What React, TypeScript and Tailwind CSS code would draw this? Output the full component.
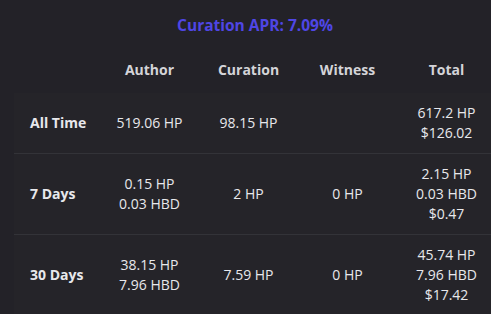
import React from "react";

const rows = [
  { label: "All Time", author: ["519.06 HP"], curation: ["98.15 HP"], witness: [], total: ["617.2 HP", "$126.02"] },
  { label: "7 Days", author: ["0.15 HP", "0.03 HBD"], curation: ["2 HP"], witness: ["0 HP"], total: ["2.15 HP", "0.03 HBD", "$0.47"] },
  { label: "30 Days", author: ["38.15 HP", "7.96 HBD"], curation: ["7.59 HP"], witness: ["0 HP"], total: ["45.74 HP", "7.96 HBD", "$17.42"] },
];

function Cell({ lines }: { lines: string[] }) {
  return (
    <td className="py-[10px] text-center align-middle">
      {lines.map((l, i) => (
        <div key={i}>{l}</div>
      ))}
    </td>
  );
}

export default function App() {
  return (
    <div
      className="w-[491px] h-[314px] overflow-hidden bg-[#232228] text-[#e8e8ec] text-sm leading-5"
      style={{ fontFamily: '"Open Sans", "Noto Sans", sans-serif' }}
    >
      <div className="ml-[14px] w-[482px] pt-[15px] text-center text-[15.5px] leading-5 font-bold text-[#4f46e5]">
        Curation APR: 7.09%
      </div>
      <table className="ml-[14px] mt-[25px] table-fixed border-collapse w-[482px]">
        <colgroup>
          <col className="w-[86px]" />
          <col className="w-[99px]" />
          <col className="w-[99px]" />
          <col className="w-[99px]" />
          <col className="w-[99px]" />
        </colgroup>
        <thead>
          <tr className="h-[33px] font-bold text-[#d4d4d8]">
            <th></th>
            <th className="text-center align-top">Author</th>
            <th className="text-center align-top">Curation</th>
            <th className="text-center align-top">Witness</th>
            <th className="text-center align-top">Total</th>
          </tr>
        </thead>
        <tbody>
          {rows.map((r, i) => (
            <tr key={i} className="bg-[#252429] border-b border-[#333338]">
              <td className="pl-4 py-[10px] font-bold text-left align-middle">{r.label}</td>
              <Cell lines={r.author} />
              <Cell lines={r.curation} />
              <Cell lines={r.witness} />
              <Cell lines={r.total} />
            </tr>
          ))}
        </tbody>
      </table>
    </div>
  );
}
